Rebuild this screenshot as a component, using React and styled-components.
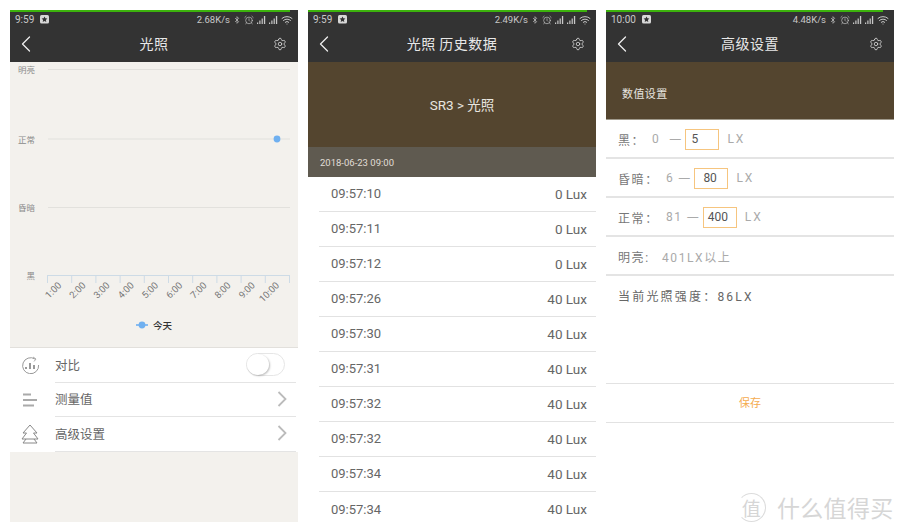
import React from 'react'
import styled, { createGlobalStyle } from 'styled-components'
import { Settings, ChevronLeft, Bluetooth, AlarmClock, Wifi } from 'lucide-react'

const CJK = '"Noto Sans CJK SC", "Noto Sans", sans-serif'
const LATIN = 'Roboto, "Noto Sans CJK SC", sans-serif'

const GlobalStyle = createGlobalStyle`
  html, body {
    margin: 0;
    background: #fff;
    font-family: ${CJK};
  }
  * { box-sizing: border-box; }
`

const Page = styled.div`
  position: relative;
  width: 904px;
  height: 532px;
  padding: 10px;
  display: flex;
  gap: 10px;
  overflow: hidden;
`

const Phone = styled.div`
  width: 288px;
  height: 512px;
  display: flex;
  flex-direction: column;
  background: ${props => props.$bg || '#fff'};
  overflow: hidden;
`

const LoadBar = styled.div`
  height: 2px;
  background: #333;
  flex: none;
  &::before {
    content: '';
    display: block;
    height: 2px;
    width: ${props => props.$width}px;
    background: #3cb20c;
  }
`

const TopBar = styled.div`
  height: 50px;
  flex: none;
  background: #333;
  color: #e4e4e4;
`

const StatusBar = styled.div`
  height: 15px;
  padding: 0 5px;
  display: flex;
  align-items: center;
  font: 400 9.5px ${LATIN};
  color: #c8c8c8;
`

const Clock = styled.span`
  font-size: 10px;
  margin-right: 6px;
`

const StatusRight = styled.div`
  margin-left: auto;
  display: flex;
  align-items: center;
  gap: 3px;
`

const NavBar = styled.div`
  height: 33px;
  display: grid;
  grid-template-columns: 1fr auto 1fr;
  align-items: center;
`

const BackIcon = styled(ChevronLeft)`
  margin-left: 2px;
`

const GearIcon = styled(Settings)`
  justify-self: end;
  margin-right: 11px;
`

const Title = styled.div`
  margin-bottom: 2px;
  font-size: 14px;
  letter-spacing: 0.5px;
  color: #e8e8e8;
`

const Badge = () => (
  <svg width="9" height="9" viewBox="0 0 9 9">
    <rect width="9" height="8.4" rx="1.5" fill="#d8d8d8" />
    <path d="M4.5 1.4l.9 1.9 2 .2-1.5 1.4.4 2-1.800-1-1.800 1 .4-2-1.500-1.400 2-.2z" fill="#333" />
  </svg>
)

const Signal = () => (
  <svg width="9" height="8" viewBox="0 0 9 8">
    <path d="M0 8h1.200V6.400H0zM2.300 8h1.200V4.600H2.300zM4.600 8h1.200V2.600H4.600zM6.900 8h1.300V0H6.900z" fill="#c8c8c8" />
  </svg>
)

function Header ({ time, speed, title, progress }) {
  return (
    <>
      <LoadBar $width={progress} />
      <TopBar>
        <StatusBar>
          <Clock>{time}</Clock>
          <Badge />
          <StatusRight>
            <span>{speed}</span>
            <Bluetooth size={8} strokeWidth={2} />
            <AlarmClock size={10} strokeWidth={1.6} />
            <Signal />
            <Signal />
            <Wifi size={12} strokeWidth={2} />
          </StatusRight>
        </StatusBar>
        <NavBar>
          <BackIcon size={28} strokeWidth={1.1} color="#eee" />
          <Title>{title}</Title>
          <GearIcon size={14} strokeWidth={1.4} color="#d8d8d8" />
        </NavBar>
      </TopBar>
    </>
  )
}

/* light level chart */
const ChartBox = styled.div`
  height: 286px;
  flex: none;
  display: flex;
  flex-direction: column;
  border-bottom: 1.5px solid #e2e0dc;
`

const Legend = styled.div`
  margin-top: 4px;
  display: flex;
  align-items: center;
  justify-content: center;
  gap: 5px;
  font-size: 9.5px;
  font-weight: 500;
  color: #333;
`

const LEVELS = [
  { name: '明亮', y: 7.5 },
  { name: '正常', y: 77 },
  { name: '昏暗', y: 145.5 }
]
const HOURS = ['1:00', '2:00', '3:00', '4:00', '5:00', '6:00', '7:00', '8:00', '9:00', '10:00']

function Chart () {
  return (
    <svg width="288" height="252" viewBox="0 0 288 252" style={{ flex: 'none' }}>
      {LEVELS.map(level => (
        <g key={level.name}>
          <line x1="38" x2="280" y1={level.y} y2={level.y} stroke="#e2e1dd" strokeWidth="1.2" />
          <text x="25" y={level.y + 3.5} textAnchor="end" fontSize="8.5" fill="#8a8a8a" fontFamily={CJK}>{level.name}</text>
        </g>
      ))}
      <text x="25" y="217" textAnchor="end" fontSize="8.5" fill="#8a8a8a" fontFamily={CJK}>黑</text>
      <path d="M37 213.500H280" stroke="#cddbe6" strokeWidth="1" />
      {[...Array(11)].map((_, i) => (
        <line key={i} x1={37.5 + i * 24.2} x2={37.5 + i * 24.2} y1="213" y2="221" stroke="#cddbe6" />
      ))}
      {HOURS.map((hour, i) => (
        <text
          key={hour}
          transform={`translate(${52 + i * 24.2} 224) rotate(-45)`}
          textAnchor="end"
          fontSize="9.5"
          fill="#777"
          fontFamily={LATIN}
        >
          {hour}
        </text>
      ))}
      <circle cx="267" cy="77" r="3.4" fill="#6fb0f0" />
    </svg>
  )
}

const LegendMark = () => (
  <svg width="12" height="8" viewBox="0 0 12 8">
    <path d="M0 4h12" stroke="#6fb0f0" strokeWidth="1.6" />
    <circle cx="6" cy="4" r="3.400" fill="#6fb0f0" />
  </svg>
)

/* settings list under the chart */
const MenuList = styled.div`
  background: #fff;
  flex: none;
`

const MenuRow = styled.div`
  height: 34.5px;
  display: flex;
  align-items: center;
`

const MenuIcon = styled.div`
  width: 45px;
  flex: none;
  display: flex;
  justify-content: center;
  padding-right: 5px;
`

const MenuBody = styled.div`
  flex: 1;
  height: 100%;
  margin-right: 2px;
  padding: 0 9px 1px 0;
  display: flex;
  align-items: center;
  justify-content: space-between;
  border-bottom: 1.5px solid #e4e4e4;
  font-size: 12.5px;
  color: #666;
`

const Toggle = styled.div`
  width: 39px;
  height: 23px;
  margin-right: 2px;
  display: flex;
  border-radius: 12px;
  border: 1px solid #e6e6e6;
  background: #fff;
`

const ToggleKnob = styled.div`
  width: 22px;
  height: 21px;
  border-radius: 50%;
  background: #fff;
  box-shadow: 1px 1px 2px rgba(0, 0, 0, 0.25);
`

const CompareIcon = () => (
  <svg width="20" height="18" viewBox="0 0 20 18" fill="none" stroke="#999" strokeWidth="1">
    <path d="M15 3A8 8 0 1 0 18.600 9" />
    <path d="M13 1l3 2-2 2.500" stroke="#aaa" />
    <path d="M6 13v-2M10 13V7M14 13V9" strokeWidth="2" />
  </svg>
)

const BarsIcon = () => (
  <svg width="16" height="14" viewBox="0 0 16 14" fill="none" stroke="#aaa" strokeWidth="1.8">
    <path d="M1 1.500h8M1 7h14M1 12.500h11" />
  </svg>
)

const TreeIcon = () => (
  <svg width="18" height="20" viewBox="0 0 18 20" fill="none" stroke="#888" strokeWidth="1">
    <path d="M9 1L2 9h3.500L1 15h16l-4.500-6H16zM5 15l-3 4h14l-3-4" />
  </svg>
)

const Arrow = () => (
  <svg width="10" height="16" viewBox="0 0 10 16" fill="none" stroke="#bbb" strokeWidth="1.800">
    <path d="M1.500 1L8.500 8L1.500 15" />
  </svg>
)

function Menu () {
  return (
    <MenuList>
      <MenuRow>
        <MenuIcon><CompareIcon /></MenuIcon>
        <MenuBody>
          对比
          <Toggle><ToggleKnob /></Toggle>
        </MenuBody>
      </MenuRow>
      <MenuRow>
        <MenuIcon><BarsIcon /></MenuIcon>
        <MenuBody>
          测量值
          <Arrow />
        </MenuBody>
      </MenuRow>
      <MenuRow>
        <MenuIcon><TreeIcon /></MenuIcon>
        <MenuBody>
          高级设置
          <Arrow />
        </MenuBody>
      </MenuRow>
    </MenuList>
  )
}

/* history */
const Banner = styled.div`
  height: 85px;
  flex: none;
  padding: 0 0 2px 20px;
  background: #54452f;
  color: #e8e6e0;
  display: flex;
  align-items: center;
  justify-content: center;
  font: 400 13.500px ${LATIN};
`

const SectionBanner = styled.div`
  height: 58px;
  flex: none;
  padding: 4px 0 0 16px;
  background: #54452f;
  color: #e8e6e0;
  display: flex;
  align-items: center;
  font-size: 11px;
  letter-spacing: 0.4px;
  border-bottom: 1px solid #a09a8c;
`

const DateStrip = styled.div`
  height: 30px;
  flex: none;
  padding-left: 12px;
  display: flex;
  align-items: center;
  background: #5f5a50;
  color: #e0ddd6;
  font: 400 9.5px ${LATIN};
`

const LogRow = styled.div`
  height: 35px;
  flex: none;
  margin-left: 11px;
  padding: 0 9px 1px 12px;
  display: flex;
  align-items: center;
  justify-content: space-between;
  border-bottom: ${props => props.$last ? 'none' : '1.5px solid #e2e2e2'};
  font: 400 13px ${LATIN};
  color: #666;
`

const LogValue = styled.span`
  font-size: 13.500px;
`

const LOGS = [
  ['09:57:10', '0 Lux'],
  ['09:57:11', '0 Lux'],
  ['09:57:12', '0 Lux'],
  ['09:57:26', '40 Lux'],
  ['09:57:30', '40 Lux'],
  ['09:57:31', '40 Lux'],
  ['09:57:32', '40 Lux'],
  ['09:57:32', '40 Lux'],
  ['09:57:34', '40 Lux'],
  ['09:57:34', '40 Lux']
]

/* thresholds form */
const FormRow = styled.div`
  height: 39px;
  flex: none;
  padding: 1px 0 0 12px;
  display: flex;
  align-items: center;
  border-bottom: 2px solid #e4e4e4;
  font: 400 12px ${LATIN};
  letter-spacing: 1.6px;
  color: #aaa;
`

const ReadingRow = styled(FormRow)`
  padding-top: 0;
  border-bottom: none;
  letter-spacing: 2.2px;
  color: #666;
`

const FieldLabel = styled.span`
  color: #777;
  width: ${props => props.$width}px;
  flex: none;
`

const Dash = styled.span`
  margin: 0 4px 0 ${props => props.$gap || 4}px;
  letter-spacing: 0;
`

const ValueBox = styled.div`
  width: 34px;
  height: 21px;
  padding-left: ${props => props.$inset}px;
  display: flex;
  align-items: center;
  flex: none;
  border: 1.5px solid #f6c57f;
  font-size: 12px;
  letter-spacing: 0;
  color: #555;
`

const Unit = styled.span`
  margin-left: 8px;
  letter-spacing: 2px;
`

const Spacer = styled.div`
  height: 68px;
  flex: none;
`

const SaveRow = styled.div`
  height: 40px;
  flex: none;
  padding-bottom: 3px;
  display: flex;
  align-items: center;
  justify-content: center;
  border-top: 1.5px solid #e2e2e2;
  border-bottom: 1.5px solid #e2e2e2;
  font-size: 11px;
  color: #f5ab4e;
`

/* brand mark in the corner of the page */
const Brand = styled.div`
  position: absolute;
  left: 737px;
  top: 491px;
  height: 32px;
  display: flex;
  align-items: center;
  gap: 11px;
  color: #d6d6d6;
  font-size: 23px;
  letter-spacing: 0.3px;
  overflow: hidden;
`

const BrandSeal = styled.div`
  width: 29px;
  height: 29px;
  border-radius: 50%;
  border: 1.5px solid #dcdcdc;
  border-left-color: transparent;
  display: flex;
  align-items: center;
  justify-content: center;
  font-size: 19px;
`

export default function App () {
  return (
    <>
      <GlobalStyle />
      <Page>
        <Phone $bg="#f3f1ed">
          <Header time="9:59" speed="2.68K/s" title="光照" progress={280} />
          <ChartBox>
            <Chart />
            <Legend><LegendMark />今天</Legend>
          </ChartBox>
          <Menu />
        </Phone>

        <Phone>
          <Header time="9:59" speed="2.49K/s" title="光照 历史数据" progress={279} />
          <Banner>SR3 &gt; 光照</Banner>
          <DateStrip>2018-06-23 09:00</DateStrip>
          {LOGS.map(([time, value], i) => (
            <LogRow key={i} $last={i === LOGS.length - 1}>
              <span>{time}</span>
              <LogValue>{value}</LogValue>
            </LogRow>
          ))}
        </Phone>

        <Phone>
          <Header time="10:00" speed="4.48K/s" title="高级设置" progress={277} />
          <SectionBanner>数值设置</SectionBanner>
          <FormRow>
            <FieldLabel $width={34}>黑：</FieldLabel>
            0<Dash $gap={9}>一</Dash>
            <ValueBox $inset={5}>5</ValueBox>
            <Unit>LX</Unit>
          </FormRow>
          <FormRow>
            <FieldLabel $width={48}>昏暗：</FieldLabel>
            6<Dash>一</Dash>
            <ValueBox $inset={8}>80</ValueBox>
            <Unit>LX</Unit>
          </FormRow>
          <FormRow>
            <FieldLabel $width={48}>正常：</FieldLabel>
            81<Dash>一</Dash>
            <ValueBox $inset={4}>400</ValueBox>
            <Unit>LX</Unit>
          </FormRow>
          <FormRow>
            <FieldLabel $width={44}>明亮:</FieldLabel>
            401LX以上
          </FormRow>
          <ReadingRow>当前光照强度：86LX</ReadingRow>
          <Spacer />
          <SaveRow>保存</SaveRow>
        </Phone>

        <Brand>
          <BrandSeal>值</BrandSeal>
          什么值得买
        </Brand>
      </Page>
    </>
  )
}
